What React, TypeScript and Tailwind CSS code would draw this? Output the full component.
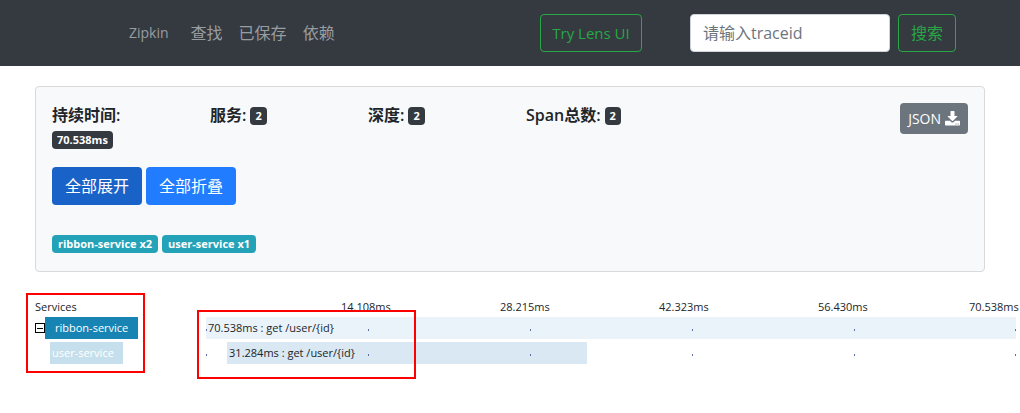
const ticks = ['14.108ms', '28.215ms', '42.323ms', '56.430ms', '70.538ms'];

const stats = [
  { label: '持续时间:', value: '70.538ms' },
  { label: '服务:', value: '2' },
  { label: '深度:', value: '2' },
  { label: 'Span总数:', value: '2' },
];

const services = ['ribbon-service x2', 'user-service x1'];

const spans = [
  { id: 'root', text: '70.538ms : get /user/{id}', left: 0, width: 100, bar: 'bg-[#ebf3fa]' },
  { id: 'child', text: '31.284ms : get /user/{id}', left: 2.6, width: 44.4, bar: 'bg-[#dae8f3]' },
];

const dots = [0, 20, 40, 60, 80, 99.9];

function DownloadIcon() {
  return (
    <svg viewBox="0 0 15 15" className="h-[15px] w-[15px]" fill="currentColor" aria-hidden="true">
      <path d="M5.5 0.6q0-.6.6-.6h2.8q.6 0 .6.6V5h2.6q.7 0 .2.6L7.9 9.9q-.4.4-.8 0L2.7 5.6Q2.2 5 2.9 5h2.6z" />
      <path
        fillRule="evenodd"
        d="M.7 9.8h4.2l1.6 1.4q1 .8 2 0l1.6-1.4h4.2q.7 0 .7.7v3.3q0 .7-.7.7H.7q-.7 0-.7-.7v-3.3q0-.7.7-.7zM10.5 12.5v1h1v-1zM12.7 12.5v1h1v-1z"
      />
    </svg>
  );
}

function Track({ span }: { span: (typeof spans)[number] }) {
  return (
    <div className="relative mr-1 h-[22px] flex-1">
      <div
        className={`absolute inset-y-0 pl-0.5 leading-[22px] whitespace-nowrap ${span.bar}`}
        style={{ left: `${span.left}%`, width: `${span.width}%` }}
      >
        {span.text}
      </div>
      {dots.map((d) => (
        <span key={d} className="absolute top-3 h-0.5 w-px bg-[#5a6fa8]" style={{ left: `${d}%` }} />
      ))}
    </div>
  );
}

export default function App() {
  return (
    <div className="bg-white font-['Open_Sans','Noto_Sans_CJK_SC',sans-serif] text-base leading-6 text-[#212529]">
      <header className="flex items-center bg-[#343a40] pt-3.5 pr-16 pb-3.5 pl-[129px]">
        <nav className="flex items-center gap-4 text-[#9a9da0]">
          <a href="#home" className="mr-1.5 text-sm">Zipkin</a>
          <a href="#find">查找</a>
          <a href="#saved">已保存</a>
          <a href="#dependency">依赖</a>
        </nav>
        <button type="button" className="ml-auto h-[38px] w-[102px] rounded border border-[#28a745] text-[15px] whitespace-nowrap text-[#28a745]">
          Try Lens UI
        </button>
        <form className="ml-12 flex gap-2" onSubmit={(e) => e.preventDefault()}>
          <input
            type="text"
            aria-label="traceid"
            placeholder="请输入traceid"
            className="h-[38px] w-[200px] rounded border border-[#ced4da] bg-white px-3 placeholder:text-[#6c757d]"
          />
          <button type="submit" className="h-[38px] rounded border border-[#28a745] px-3 text-[#28a745]">
            搜索
          </button>
        </form>
      </header>

      <main className="pt-5">
        <section className="mx-[35px] rounded border border-[#d7d9db] bg-[#f8f9fa] p-4">
          <div className="-mx-4 grid grid-cols-6">
            {stats.map((s) => (
              <div key={s.label} className="flex flex-wrap content-start items-center gap-x-1 px-4 font-semibold">
                <span>{s.label}</span>
                <span className="flex h-6 items-center pt-0.5">
                  <span className="rounded bg-[#343a40] px-[5px] text-[11px] leading-[18px] font-bold text-white">{s.value}</span>
                </span>
              </div>
            ))}
            <div className="col-span-2 px-4 text-right">
              <button type="button" className="inline-flex h-[31px] items-center gap-1 rounded bg-[#6c757d] px-2 text-sm text-white">
                JSON <DownloadIcon />
              </button>
            </div>
          </div>
          <div className="mt-4 flex gap-1 text-white">
            <button type="button" className="h-[38px] rounded bg-[#1962c8] px-[13px]">全部展开</button>
            <button type="button" className="h-[38px] rounded bg-[#217cff] px-[13px]">全部折叠</button>
          </div>
          <ul className="mt-[30px] flex gap-1 pb-0.5">
            {services.map((s) => (
              <li key={s} className="rounded bg-[#24a2b8] px-1.5 text-[11px] leading-[18px] font-bold text-white">{s}</li>
            ))}
          </ul>
        </section>

        <section className="relative pt-[25px] pb-6 pl-[35px] text-[11px]">
          <div className="grid grid-cols-[306px_159fr_159fr_159fr_151fr_51px] leading-5">
            <span>Services</span>
            {ticks.map((t) => (
              <span key={t} className="whitespace-nowrap">{t}</span>
            ))}
          </div>
          <div className="flex flex-col gap-[3px]">
            <div className="flex">
              <div className="flex w-[171px] items-center">
                <button type="button" aria-label="折叠" className="flex h-2.5 w-2.5 items-center justify-center border border-black">
                  <span className="h-px w-1.5 bg-black" />
                </button>
                <span className="h-[22px] w-[93px] bg-[#1784b4] pl-2.5 leading-[22px] whitespace-nowrap text-white">ribbon-service</span>
              </div>
              <Track span={spans[0]} />
            </div>
            <div className="flex">
              <div className="w-[171px] pl-[15px]">
                <span className="block h-[22px] w-[73px] bg-[#c5e0ec] pl-0.5 leading-[22px] whitespace-nowrap text-white">user-service</span>
              </div>
              <Track span={spans[1]} />
            </div>
          </div>
          <div className="pointer-events-none absolute top-[21px] left-[26px] h-20 w-[119px] border-2 border-[#ff0000]" />
          <div className="pointer-events-none absolute top-[38px] left-[197px] h-[69px] w-[219px] border-2 border-[#ff0000]" />
        </section>
      </main>
    </div>
  );
}
